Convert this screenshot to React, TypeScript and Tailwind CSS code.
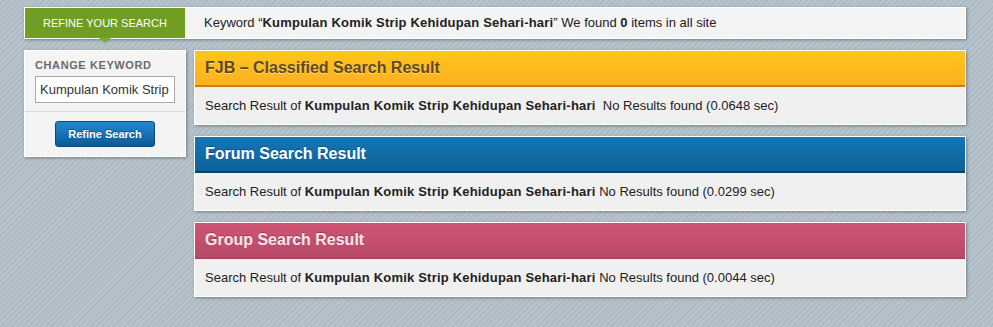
import React from "react";

const keyword = "Kumpulan Komik Strip Kehidupan Sehari-hari";

const sections = [
  {
    title: "FJB \u2013 Classified Search Result",
    head: "bg-[linear-gradient(#ffc51c,#ffb020)] border-b-2 border-[#cf7a1e] text-[#5b4a1f] [text-shadow:0_1px_0_rgba(255,255,255,0.45)]",
    time: "0.0648",
    gap: true,
  },
  {
    title: "Forum Search Result",
    head: "bg-[linear-gradient(#1477b8,#0f6098)] border-b-2 border-[#123f5f] text-white [text-shadow:0_-1px_0_rgba(0,0,0,0.3)]",
    time: "0.0299",
    gap: false,
  },
  {
    title: "Group Search Result",
    head: "bg-[linear-gradient(#d05574,#b74a66)] border-b-2 border-[#a8455f] text-[#f7e6ec] [text-shadow:0_-1px_0_rgba(0,0,0,0.25)]",
    time: "0.0044",
    gap: false,
  },
];

export default function App() {
  return (
    <div
      className="min-h-[327px] w-full bg-[#b5c1ca] bg-[repeating-linear-gradient(135deg,#b8c4cd_0px,#b8c4cd_2px,#afbbc4_2px,#afbbc4_4px)] pt-[7px] pl-[24px] text-[#222]"
      style={{ fontFamily: '"Liberation Sans", Arial, sans-serif' }}
    >
      <div className="w-[942px]">
        {/* Top bar */}
        <div className="relative flex h-[32px] border border-white bg-[#f4f4f4] shadow-[1px_1px_3px_rgba(0,0,0,0.35)]">
          <div className="relative flex w-[160px] items-center justify-center bg-[#6f9e23] text-[11px] uppercase text-white">
            Refine your search
            <span className="absolute left-1/2 top-full -translate-x-1/2 border-x-[6px] border-t-[5px] border-x-transparent border-t-[#7aa63a]" />
          </div>
          <div className="flex items-center pl-[19px] text-[13px]">
            <span>
              Keyword &ldquo;<b className="tracking-[0.2px]">{keyword}</b>&rdquo; We found <b>0</b> items in all site
            </span>
          </div>
        </div>

        <div className="mt-[11px] flex gap-[8px]">
          {/* Left panel */}
          <div className="h-[107px] w-[162px] shrink-0 border border-white bg-[#f4f4f4] shadow-[1px_1px_3px_rgba(0,0,0,0.35)]">
            <div className="px-[10px] pt-[7px]">
              <div className="text-[11px] font-bold leading-[14px] tracking-[0.6px] text-[#6b6b6b]">CHANGE KEYWORD</div>
              <input
                readOnly
                value="Kumpulan Komik Strip Kehidupan Sehari-hari"
                className="mt-[4px] h-[27px] w-[140px] border border-[#aaaaaa] bg-white px-[4px] text-[13px] text-[#333] outline-none"
              />
            </div>
            <div className="mt-[8px] border-t border-[#dcdcdc]" />
            <div className="flex justify-center pt-[9px]">
              <button className="h-[26px] w-[100px] rounded-[3px] border border-[#0a4a7a] bg-[linear-gradient(#2389d0,#0b5a96)] text-[11px] font-bold text-white [text-shadow:0_-1px_0_rgba(0,0,0,0.35)]">
                Refine Search
              </button>
            </div>
          </div>

          {/* Results */}
          <div className="flex w-[772px] flex-col gap-[11px]">
            {sections.map((s) => (
              <div key={s.title} className="border border-white bg-[#f0f0f0] shadow-[1px_1px_3px_rgba(0,0,0,0.35)]">
                <div className={`flex h-[36px] items-center pl-[10px] text-[16px] font-bold ${s.head}`}>{s.title}</div>
                <div className="flex h-[37px] items-center pl-[10px] text-[13px]">
                  <span className="whitespace-pre">
                    Search Result of <b className="tracking-[0.2px]">{keyword}</b>
                    {s.gap ? "  " : " "}No Results found ({s.time} sec)
                  </span>
                </div>
              </div>
            ))}
          </div>
        </div>
      </div>
    </div>
  );
}
